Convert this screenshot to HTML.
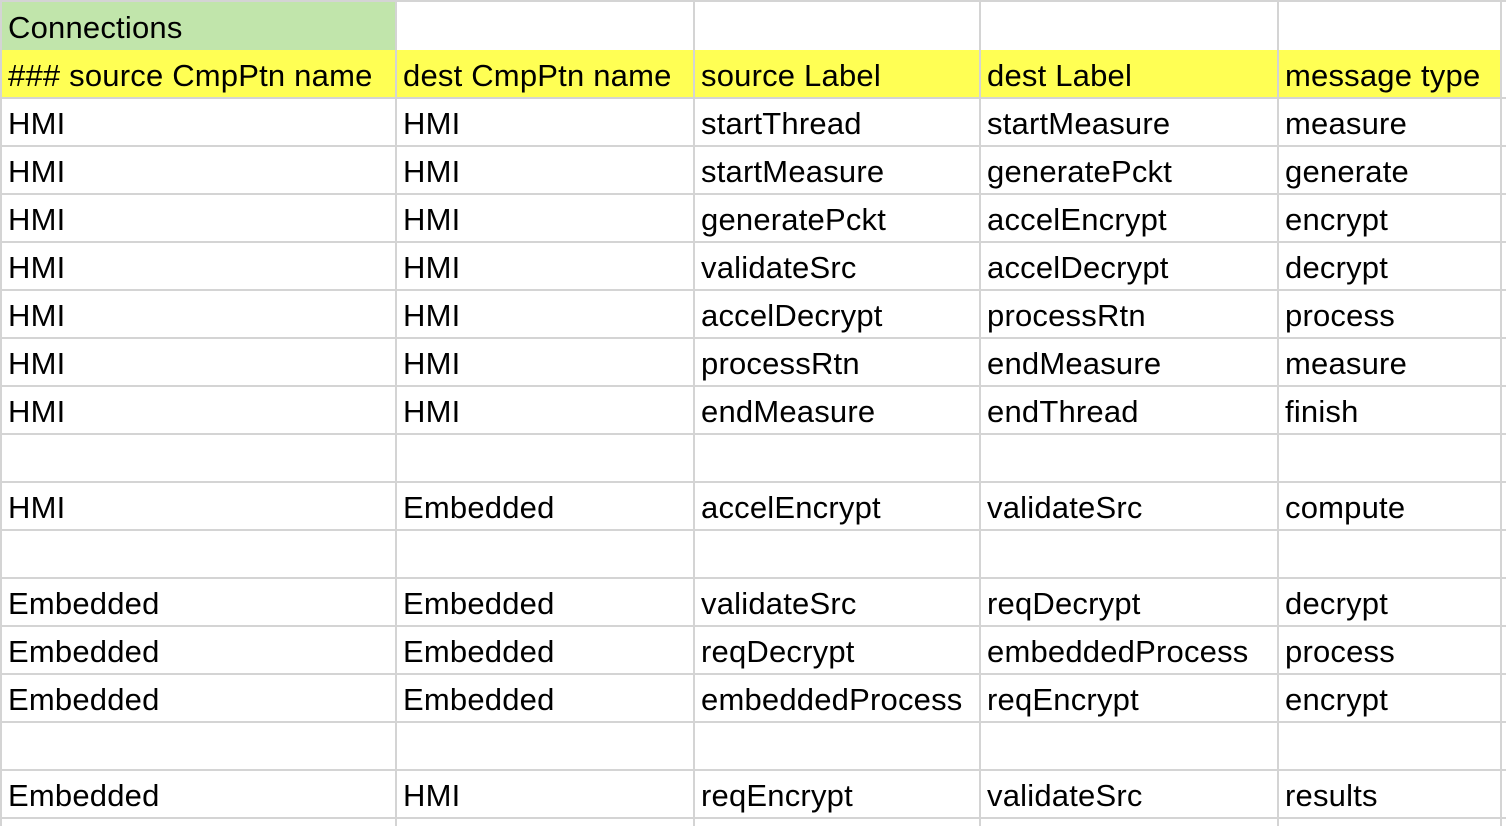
<!DOCTYPE html>
<html><head><meta charset="utf-8"><style>
body{margin:0;width:1506px;height:826px;overflow:hidden;background:#fff;font-family:"Liberation Sans",sans-serif;}
.g{position:absolute;background:#d4d4d4;}
.c{position:absolute;height:48px;line-height:52px;font-size:31px;color:#000;white-space:nowrap;letter-spacing:0.2px;}
</style></head><body>
<div style="position:absolute;left:2px;top:2px;width:393px;height:48px;background:#c1e5ab"></div>
<div style="position:absolute;left:2px;top:50px;width:1498px;height:49px;background:#ffff54"></div>
<div id="grid"></div>
<div id="cells"></div>
<script>
var xs=[0,395,693,979,1277,1500];
var g='';
for(var i=0;i<xs.length;i++){g+='<div class="g" style="left:'+xs[i]+'px;top:'+(i==0?0:0)+'px;width:2px;height:826px"></div>';}
for(var r=0;r<=17;r++){var y=48*r+1; if(r==1) continue; if(r==0)y=0; g+='<div class="g" style="left:0;top:'+y+'px;width:1506px;height:2px"></div>';}
document.getElementById('grid').innerHTML=g;
var rows=[
["Connections","","","",""],
["### source CmpPtn name","dest CmpPtn name","source Label","dest Label","message type"],
["HMI","HMI","startThread","startMeasure","measure"],
["HMI","HMI","startMeasure","generatePckt","generate"],
["HMI","HMI","generatePckt","accelEncrypt","encrypt"],
["HMI","HMI","validateSrc","accelDecrypt","decrypt"],
["HMI","HMI","accelDecrypt","processRtn","process"],
["HMI","HMI","processRtn","endMeasure","measure"],
["HMI","HMI","endMeasure","endThread","finish"],
["","","","",""],
["HMI","Embedded","accelEncrypt","validateSrc","compute"],
["","","","",""],
["Embedded","Embedded","validateSrc","reqDecrypt","decrypt"],
["Embedded","Embedded","reqDecrypt","embeddedProcess","process"],
["Embedded","Embedded","embeddedProcess","reqEncrypt","encrypt"],
["","","","",""],
["Embedded","HMI","reqEncrypt","validateSrc","results"]];
var h='';
for(var r=0;r<rows.length;r++)for(var c=0;c<5;c++){if(rows[r][c])h+='<div class="c" style="left:'+(xs[c]+8)+'px;top:'+(2+48*r)+'px">'+rows[r][c]+'</div>';}
document.getElementById('cells').innerHTML=h;
</script>
</body></html>
